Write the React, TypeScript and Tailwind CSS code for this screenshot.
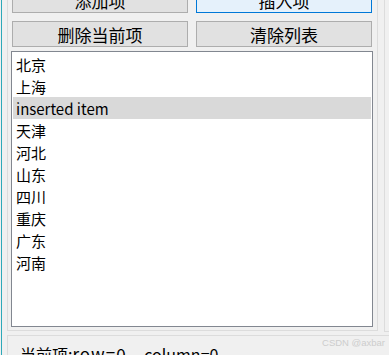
import React from "react";

const ITEMS = ["北京", "上海", "inserted item", "天津", "河北", "山东", "四川", "重庆", "广东", "河南"];
const SELECTED = 2;

const font = { fontFamily: '"Noto Sans CJK SC", "Noto Sans", sans-serif' };

function Btn({ label, focused = false }: { label: string; focused?: boolean }) {
  return (
    <button
      className={`h-[26px] flex items-center justify-center text-[17px] leading-none text-black border ${
        focused ? "bg-[#e5f1fb] border-[#0078d7]" : "bg-[#e1e1e1] border-[#adadad]"
      }`}
    >
      {label}
    </button>
  );
}

export default function App() {
  return (
    <div className="w-[389px] h-[355px] overflow-hidden bg-[#f0f0f0] flex relative" style={font}>
      <div className="ml-px w-px h-full bg-[#2ea9b9] shrink-0" />
      <div className="flex-1 flex flex-col pl-[5px]">
        <div className="flex gap-[6px] mt-[-40px]">
          {/* left group box */}
          <div className="w-[371px] shrink-0 border border-[#dcdcdc] pt-[26px] pl-[3px] pr-[4px] pb-[3px]">
            <div className="grid grid-cols-[176px_176px] gap-x-[8px] gap-y-[8px] pl-px">
              <Btn label="添加项" />
              <Btn label="插入项" focused />
              <Btn label="删除当前项" />
              <Btn label="清除列表" />
            </div>
            <div className="mt-[4px] h-[276px] border border-[#828790] bg-white p-px">
              {ITEMS.map((it, i) => (
                <div
                  key={it}
                  className={`h-[22px] flex items-center pl-[3px] text-[15px] leading-none text-black ${
                    i === SELECTED ? "bg-[#d9d9d9]" : ""
                  }`}
                >
                  {it}
                </div>
              ))}
            </div>
          </div>
          {/* neighbouring panel on the right */}
          <div className="flex-1 border-l border-b border-[#dcdcdc] mb-[-1px]" />
        </div>
        {/* bottom group box */}
        <div className="mt-[4px] flex-1 border-t border-l border-[#dcdcdc] pl-[12px] pt-[9px]">
          <div className="flex items-baseline text-[16px] leading-none text-black whitespace-nowrap">
            <span>当前项:</span>
            <span className="text-[17px] tracking-[1px]">row=0,</span>
            <span className="ml-[12px] text-[16px]">column=0</span>
          </div>
        </div>
      </div>
      <div
        className="absolute right-[4px] top-[338px] text-[9.5px] leading-none text-[#cdcdcd]"
        style={{ fontFamily: '"Liberation Sans", Arial, sans-serif' }}
      >
        CSDN @axbar
      </div>
    </div>
  );
}
